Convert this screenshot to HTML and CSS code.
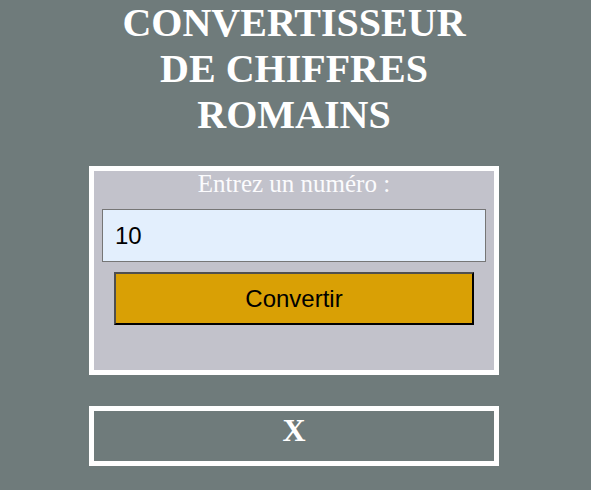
FILE: index.html
```html
<!DOCTYPE html>
<html lang="fr">
<head>
<meta charset="utf-8">
<title>Convertisseur de chiffres romains</title>
<link rel="stylesheet" href="styles.css">
</head>
<body>
<main class="app">
  <h1 class="title">CONVERTISSEUR DE CHIFFRES ROMAINS</h1>
  <form class="card">
    <label class="label" for="number">Entrez un numéro :</label>
    <input class="number" id="number" type="text" value="10">
    <button class="convert" type="button">Convertir</button>
  </form>
  <div class="result">X</div>
</main>
</body>
</html>
```

FILE: styles.css
```css
html, body {
  margin: 0;
  padding: 0;
  background: #6f7b7b;
}

.app {
  display: flex;
  flex-direction: column;
  align-items: center;
  padding-right: 3px;
  font-family: "Liberation Serif", "Times New Roman", serif;
}

.title {
  margin: 0;
  width: 380px;
  text-align: center;
  color: #ffffff;
  font-size: 40px;
  font-weight: bold;
  line-height: 46px;
}

.card {
  box-sizing: border-box;
  width: 410px;
  margin: 28px 0 0;
  padding: 0 8px 45px;
  border: 5px solid #ffffff;
  background: #c2c2cb;
  display: flex;
  flex-direction: column;
  align-items: center;
}

.label {
  display: block;
  color: #fbfbfd;
  font-size: 25px;
  line-height: 26px;
  text-align: center;
}

.number {
  box-sizing: border-box;
  width: 100%;
  height: 53px;
  margin-top: 12px;
  padding: 0 12px;
  border: 1px solid #767676;
  background: #e3effd;
  color: #000;
  font-family: "Liberation Sans", Arial, sans-serif;
  font-size: 24px;
  outline: none;
}

.convert {
  box-sizing: border-box;
  width: 360px;
  height: 53px;
  margin-top: 10px;
  padding: 0;
  border: 2px solid;
  border-color: #4f4f4f #000 #000 #4f4f4f;
  background: #d9a005;
  color: #000;
  font-family: "Liberation Sans", Arial, sans-serif;
  font-size: 24px;
}

.result {
  box-sizing: border-box;
  width: 410px;
  height: 60px;
  margin-top: 31px;
  padding-top: 1px;
  border: 5px solid #ffffff;
  text-align: center;
  color: #ffffff;
  font-size: 32px;
  font-weight: bold;
  line-height: normal;
}
```
